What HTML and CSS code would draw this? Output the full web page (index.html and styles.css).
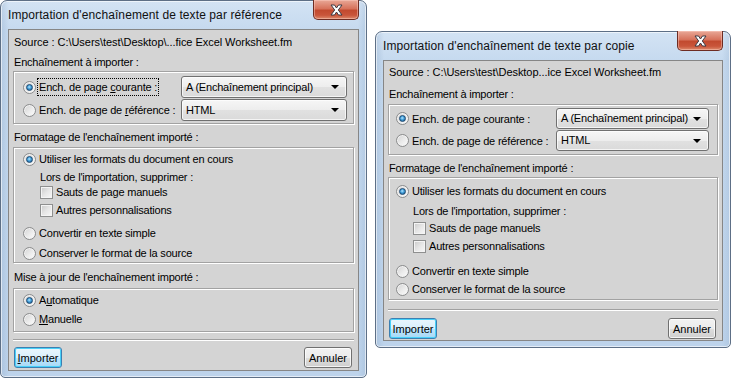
FILE: index.html
```html
<!doctype html>
<html lang="fr">

<head>
  <meta charset="UTF-8" />
  <title>Importation d'enchaînement de texte</title>
  <link rel="stylesheet" href="styles.css">
</head>

<body>
  <div class="desk">

    <!-- Dialog 1 : import by reference -->
    <section class="dialog reference">
      <header class="titlebar">
        <span class="title">Importation d'enchaînement de texte par référence</span>
        <span class="close">
          <svg width="13" height="12" viewBox="-1 -1 13 12">
            <polygon points="0,0 3.5,0 5.5,3 7.5,0 11,0 7.3,5 11,10 7.5,10 5.5,7 3.5,10 0,10 3.7,5" fill="#fff" stroke="#3b3b45" stroke-width="1" stroke-linejoin="round" />
          </svg>
        </span>
      </header>

      <div class="panel">
        <p class="line source">Source : C:\Users\test\Desktop\...fice Excel Worksheet.fm</p>
        <p class="line caption cap-flow">Enchaînement à importer :</p>

        <div class="group flow">
          <div class="pick">
            <label class="opt"><span class="radio on"></span><span class="lbl focus">Ench. de page <u>c</u>ourante :</span></label>
            <div class="combo">A (Enchaînement principal)</div>
          </div>
          <div class="pick">
            <label class="opt"><span class="radio"></span><span class="lbl">Ench. de page de <u>r</u>éférence :</span></label>
            <div class="combo">HTML</div>
          </div>
        </div>

        <p class="line caption cap-format">Formatage de l'enchaînement importé :</p>

        <div class="group format">
          <label class="opt r-use"><span class="radio on"></span><span class="lbl">Utiliser les formats du document en cours</span></label>
          <p class="sub r-when">Lors de l'importation, supprimer :</p>
          <label class="opt sub r-breaks"><span class="check"></span><span class="lbl">Sauts de page manuels</span></label>
          <label class="opt sub r-other"><span class="check"></span><span class="lbl">Autres personnalisations</span></label>
          <label class="opt r-plain"><span class="radio"></span><span class="lbl">Convertir en texte simple</span></label>
          <label class="opt r-keep"><span class="radio"></span><span class="lbl">Conserver le format de la source</span></label>
        </div>

        <p class="line caption cap-update">Mise à jour de l'enchaînement importé :</p>

        <div class="group update">
          <label class="opt r-auto"><span class="radio on"></span><span class="lbl">A<u>u</u>tomatique</span></label>
          <label class="opt r-manual"><span class="radio"></span><span class="lbl"><u>M</u>anuelle</span></label>
        </div>

        <div class="sep"></div>

        <div class="buttons">
          <button class="btn default"><u>I</u>mporter</button>
          <button class="btn">Annuler</button>
        </div>
      </div>
    </section>

    <!-- Dialog 2 : import by copy -->
    <section class="dialog copy">
      <header class="titlebar">
        <span class="title">Importation d'enchaînement de texte par copie</span>
        <span class="close">
          <svg width="13" height="12" viewBox="-1 -1 13 12">
            <polygon points="0,0 3.5,0 5.5,3 7.5,0 11,0 7.3,5 11,10 7.5,10 5.5,7 3.5,10 0,10 3.7,5" fill="#fff" stroke="#3b3b45" stroke-width="1" stroke-linejoin="round" />
          </svg>
        </span>
      </header>

      <div class="panel">
        <p class="line source">Source : C:\Users\test\Desktop...ice Excel Worksheet.fm</p>
        <p class="line caption cap-flow">Enchaînement à importer :</p>

        <div class="group flow">
          <div class="pick">
            <label class="opt"><span class="radio on"></span><span class="lbl">Ench. de page courante :</span></label>
            <div class="combo">A (Enchaînement principal)</div>
          </div>
          <div class="pick">
            <label class="opt"><span class="radio"></span><span class="lbl">Ench. de page de référence :</span></label>
            <div class="combo">HTML</div>
          </div>
        </div>

        <p class="line caption cap-format">Formatage de l'enchaînement importé :</p>

        <div class="group format">
          <label class="opt r-use"><span class="radio on"></span><span class="lbl">Utiliser les formats du document en cours</span></label>
          <p class="sub r-when">Lors de l'importation, supprimer :</p>
          <label class="opt sub r-breaks"><span class="check"></span><span class="lbl">Sauts de page manuels</span></label>
          <label class="opt sub r-other"><span class="check"></span><span class="lbl">Autres personnalisations</span></label>
          <label class="opt r-plain"><span class="radio"></span><span class="lbl">Convertir en texte simple</span></label>
          <label class="opt r-keep"><span class="radio"></span><span class="lbl">Conserver le format de la source</span></label>
        </div>

        <div class="sep"></div>

        <div class="buttons">
          <button class="btn default">Importer</button>
          <button class="btn">Annuler</button>
        </div>
      </div>
    </section>

  </div>
</body>

</html>
```

FILE: styles.css
```css
* {
  margin: 0;
  padding: 0;
  box-sizing: border-box;
}

body {
  background: #fff;
  font-family: "Liberation Sans", Arial, sans-serif;
  font-size: 11px;
  letter-spacing: -0.2px;
  color: #000;
}

u {
  text-decoration: underline;
  text-underline-offset: 1px;
}

.desk {
  position: relative;
  width: 731px;
  height: 379px;
  overflow: hidden;
}

/* Window frame (Aero glass) */
.dialog {
  position: absolute;
  display: flex;
  flex-direction: column;
  padding: 0 7px 6px;
  border: 1px solid #5d6f86;
  border-radius: 7px 7px 5px 5px;
  background:
    linear-gradient(90deg, rgba(120, 150, 185, 0.25) 0, rgba(255, 255, 255, 0) 8px, rgba(255, 255, 255, 0) calc(100% - 8px), rgba(120, 150, 185, 0.2) 100%),
    linear-gradient(180deg, #d3e3f4 0, #c6daef 28px, #bdd3eb 100%);
  box-shadow: inset 0 0 0 1px rgba(255, 255, 255, 0.6);
}

.reference {
  left: 0;
  top: 0;
  width: 367px;
  height: 378px;
}

.copy {
  left: 375px;
  top: 31px;
  width: 356px;
  height: 317px;
}

.titlebar {
  position: relative;
  display: flex;
  align-items: center;
  height: 28px;
  flex: none;
}

.title {
  font-size: 12px;
  letter-spacing: 0.1px;
  color: #111;
}

.close {
  position: absolute;
  top: -1px;
  right: 0;
  width: 46px;
  height: 20px;
  display: flex;
  align-items: center;
  justify-content: center;
  border: 1px solid #6e2c22;
  border-top: none;
  border-radius: 0 0 5px 5px;
  background: linear-gradient(180deg, #e9a897 0, #d7735c 45%, #c24a2f 55%, #c9553a 80%, #dd8a6c 100%);
  box-shadow: inset 0 0 0 1px rgba(255, 210, 200, 0.45);
}

/* Client area */
.panel {
  flex: 1;
  display: flex;
  flex-direction: column;
  padding: 0 4px;
  background: #d4d4d4;
  border: 1px solid #868686;
}

.line {
  height: 18px;
  line-height: 18px;
  padding-left: 1px;
  white-space: nowrap;
}

.source {
  margin-top: 3px;
  letter-spacing: -0.05px;
}

.cap-flow {
  margin-top: 2px;
}

.cap-format {
  margin-top: 4px;
}

.cap-update {
  margin-top: 5px;
}

.group {
  display: flex;
  flex-direction: column;
  border: 1px solid #a2a2a2;
  box-shadow: inset 1px 1px 0 #fff, 1px 1px 0 #fff;
}

.flow {
  margin-top: 0;
  padding: 4px 6px 2px 9px;
  gap: 1px;
}

.format {
  margin-top: 1px;
  padding: 2px 9px 0;
}

.update {
  margin-top: 2px;
  padding: 2px 9px 3px;
  gap: 1px;
}

.pick {
  display: grid;
  grid-template-columns: 158px 1fr;
  align-items: center;
  height: 22px;
}

.opt {
  display: flex;
  align-items: center;
  height: 18px;
  white-space: nowrap;
}

.lbl {
  margin-left: 1px;
  padding: 0 1px;
  border: 1px dotted transparent;
  line-height: 16px;
}

.focus {
  border-color: #000;
}

.sub {
  margin-left: 17px;
  height: 14px;
  line-height: 14px;
}

.r-use {
  height: 18px;
}

.r-when {
  margin-top: 1px;
  height: 16px;
  line-height: 16px;
}

.r-other {
  margin-top: 4px;
}

.r-plain {
  margin-top: 7px;
}

.r-keep {
  margin-top: 2px;
}

/* Radio button */
.radio {
  position: relative;
  flex: none;
  width: 13px;
  height: 13px;
  border-radius: 50%;
  border: 1px solid #8b8c8d;
  background: linear-gradient(135deg, #d2d2d2 0, #ececec 55%, #fdfdfd 100%);
  box-shadow: inset 0 0 0 1px #f2f2f2;
}

.radio.on::after {
  content: "";
  position: absolute;
  inset: 2px;
  border-radius: 50%;
  border: 1px solid #1d4a73;
  background: radial-gradient(circle at 45% 40%, #b9e6ff 0, #4aa6df 40%, #19598f 90%);
}

/* Check box */
.check {
  flex: none;
  width: 13px;
  height: 13px;
  border: 1px solid #8e8f8f;
  background: linear-gradient(135deg, #c9c9c9 0, #e6e6e6 50%, #f8f8f8 100%);
  box-shadow: inset 0 0 0 1px #f4f4f4;
}

/* Drop-down list */
.combo {
  position: relative;
  height: 22px;
  line-height: 20px;
  padding-left: 4px;
  border: 1px solid #707070;
  border-radius: 3px;
  background: linear-gradient(180deg, #f6f6f6 0, #ededed 50%, #e1e1e1 51%, #dadada 100%);
  box-shadow: inset 0 0 0 1px rgba(255, 255, 255, 0.7);
  white-space: nowrap;
}

.combo::after {
  content: "";
  position: absolute;
  right: 7px;
  top: 8px;
  border-left: 4px solid transparent;
  border-right: 4px solid transparent;
  border-top: 4px solid #000;
}

.sep {
  margin-top: 7px;
  height: 2px;
  border-top: 1px solid #a0a0a0;
  border-bottom: 1px solid #fff;
}

.buttons {
  display: flex;
  justify-content: space-between;
  margin-top: 6px;
  padding: 0 2px 0 1px;
}

.btn {
  width: 48px;
  height: 21px;
  border: 1px solid #707070;
  border-radius: 3px;
  background: linear-gradient(180deg, #f2f2f2 0, #ebebeb 50%, #dddddd 51%, #cfcfcf 100%);
  box-shadow: inset 0 0 0 1px rgba(255, 255, 255, 0.75);
  font: inherit;
  color: #000;
}

.btn.default {
  border-color: #3c7fb1;
  background: linear-gradient(180deg, #eaf6fd 0, #d9f0fc 50%, #bee6fd 51%, #a7d9f5 100%);
  box-shadow: inset 0 0 0 1px #48d0f8;
}

/* Copy dialog spacing */
.copy .source {
  margin-top: 2px;
}

.copy .cap-flow {
  margin-top: 4px;
}

.copy .flow {
  margin-top: 1px;
  padding: 3px 8px 3px 7px;
}

.copy .pick {
  grid-template-columns: 160px 1fr;
  height: 21px;
}

.copy .combo {
  height: 21px;
  line-height: 19px;
}

.copy .cap-format {
  margin-top: 5px;
  height: 17px;
  line-height: 17px;
}

.copy .format {
  margin-top: 0;
  padding: 4px 7px 1px;
}

.copy .r-when {
  margin-top: 3px;
}

.copy .r-breaks {
  margin-top: 2px;
}

.copy .r-plain {
  margin-top: 9px;
}

.copy .r-keep {
  margin-top: 0;
}

.copy .sep {
  margin-top: 9px;
}

.copy .buttons {
  margin-top: 7px;
}
```
